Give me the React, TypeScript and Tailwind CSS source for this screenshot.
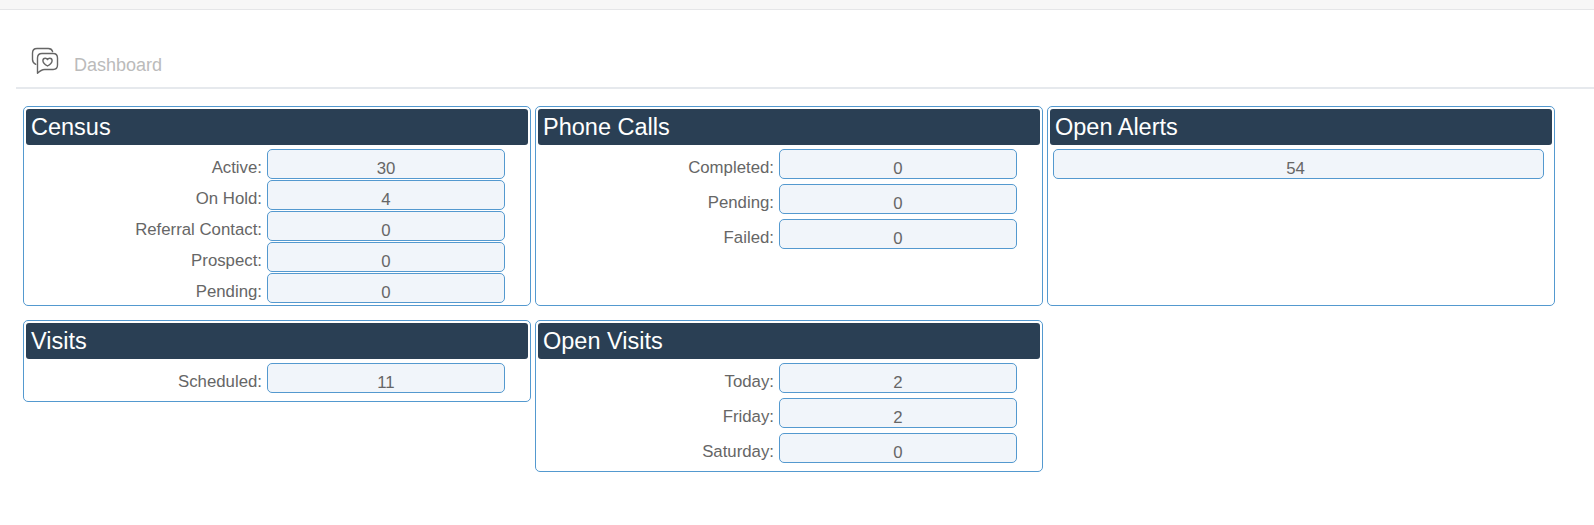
type Row = { label?: string; value: number };

function ChatHeartIcon() {
  return (
    <svg
      className="h-7 w-7 shrink-0"
      viewBox="0 0 28 28"
      fill="none"
      stroke="#666666"
      strokeWidth="1.4"
      strokeLinecap="round"
      strokeLinejoin="round"
    >
      <path d="M4.800 17.300C2.600 16.300 1.500 14.600 1.500 12.500V6.200C1.500 3.400 3.300 1.500 6.100 1.500H17.300C19.600 1.500 21 2.600 21.600 4.500" />
      <path d="M11 6.500H22.100C24.900 6.500 26.500 8.300 26.500 11.100V18C26.500 20.800 24.900 22.500 22.100 22.500H13.500C10.800 22.500 8.500 24.300 6.500 26.300V11.100C6.500 8.300 8.200 6.500 11 6.500Z" />
      <path d="M16.500 19C13.800 17.500 11.900 16 11.900 13.800C11.900 12.200 13 11.300 14.300 11.300C15.300 11.300 16.100 11.700 16.500 12.600C16.900 11.700 17.700 11.300 18.700 11.300C20 11.300 21.100 12.200 21.100 13.800C21.100 16 19.200 17.500 16.500 19Z" />
    </svg>
  );
}

function Value({ value, wide }: { value: number; wide?: boolean }) {
  return (
    <div
      className={`${wide ? "ml-[3px] w-[491px] pr-[6px]" : "ml-[5px] w-[238px]"} h-[30px] rounded-[5px] border border-[#5499cf] bg-[#f1f5fa] pt-[7px] text-center leading-[23px]`}
    >
      {value}
    </div>
  );
}

function Card({ title, rows, height, dense }: { title: string; rows: Row[]; height: string; dense?: boolean }) {
  return (
    <section className={`${height} w-[508px] rounded-[5px] border border-[#5499cf] p-[2px]`}>
      <h2 className="h-9 rounded-[3px] bg-[#2a3f54] pl-[5px] text-[23.5px] leading-[36px] text-white">{title}</h2>
      <div className={`${dense ? "gap-px" : "gap-[5px]"} flex flex-col pt-1`}>
        {rows.map((row, i) => (
          <div key={i} className="flex h-[30px]">
            {row.label && <span className="w-[236px] text-right leading-[37px] whitespace-nowrap">{row.label}:</span>}
            <Value value={row.value} wide={!row.label} />
          </div>
        ))}
      </div>
    </section>
  );
}

export default function App() {
  return (
    <div className="h-[525px] overflow-hidden bg-white font-['Liberation_Sans',Arial,sans-serif] text-[16.8px] text-[#666666]">
      <div className="h-[10px] border-b border-[#e5e6e8] bg-[#f7f7f7]" />
      <header className="ml-4 flex h-[79px] border-b-2 border-[#e6e9ed] pt-[37px] pl-[15px]">
        <ChatHeartIcon />
        <h1 className="ml-[15px] pt-[7px] text-[18px] leading-[22px] text-[#bbbbbb]">Dashboard</h1>
      </header>
      <main className="grid grid-cols-[508px_508px_508px] items-start gap-x-1 gap-y-[14px] pt-[17px] pl-[23px]">
        <Card
          title="Census"
          height="h-[200px]"
          dense
          rows={[
            { label: "Active", value: 30 },
            { label: "On Hold", value: 4 },
            { label: "Referral Contact", value: 0 },
            { label: "Prospect", value: 0 },
            { label: "Pending", value: 0 },
          ]}
        />
        <Card
          title="Phone Calls"
          height="h-[200px]"
          rows={[
            { label: "Completed", value: 0 },
            { label: "Pending", value: 0 },
            { label: "Failed", value: 0 },
          ]}
        />
        <Card title="Open Alerts" height="h-[200px]" rows={[{ value: 54 }]} />
        <Card title="Visits" height="h-[82px]" rows={[{ label: "Scheduled", value: 11 }]} />
        <Card
          title="Open Visits"
          height="h-[152px]"
          rows={[
            { label: "Today", value: 2 },
            { label: "Friday", value: 2 },
            { label: "Saturday", value: 0 },
          ]}
        />
      </main>
    </div>
  );
}
